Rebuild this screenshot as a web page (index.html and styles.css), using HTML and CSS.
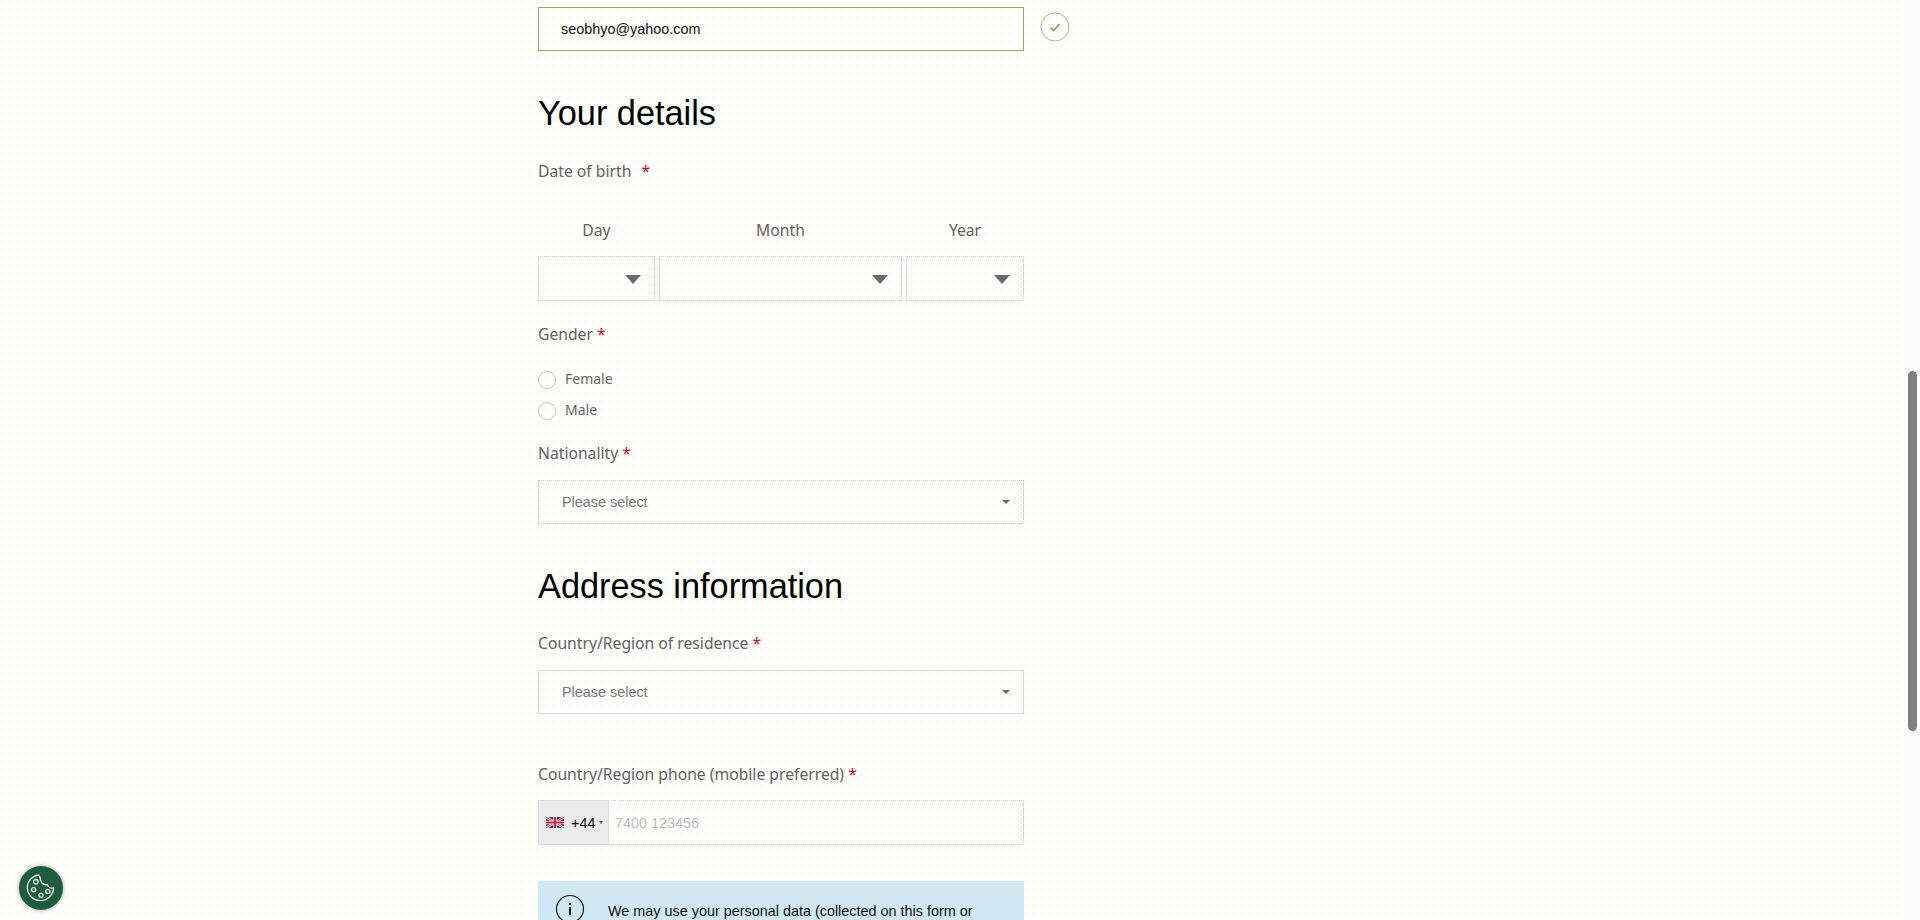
FILE: index.html
```html
<!DOCTYPE html>
<html lang="en">
<head>
<meta charset="utf-8">
<title>Your details</title>
<link rel="stylesheet" href="styles.css">
</head>
<body>
<main class="form">
  <div class="email-row">
    <div class="field field-valid"><span class="value">seobhyo@yahoo.com</span></div>
    <svg class="valid-icon" viewBox="0 0 30 30" aria-hidden="true"><circle cx="15" cy="15" r="14" fill="none" stroke="#a9bd88" stroke-width="1"/><path d="M10.5 15.5l3 3 6-6.500" fill="none" stroke="#7f9c4a" stroke-width="1.600"/></svg>
  </div>

  <h2 class="heading heading-first">Your details</h2>
  <div class="label label-first">Date of birth <span class="req req-gap">*</span></div>
  <div class="dob-labels">
    <span>Day</span><span>Month</span><span>Year</span>
  </div>
  <div class="dob">
    <div class="field field-dotted"><i class="caret-large"></i></div>
    <div class="field field-dotted"><i class="caret-large"></i></div>
    <div class="field field-dotted"><i class="caret-large"></i></div>
  </div>

  <div class="label label-gender">Gender <span class="req">*</span></div>
  <div class="radios">
    <label class="radio"><i class="radio-dot"></i>Female</label>
    <label class="radio"><i class="radio-dot"></i>Male</label>
  </div>

  <div class="label label-nationality">Nationality <span class="req">*</span></div>
  <div class="field field-dotted field-select"><span class="placeholder">Please select</span><i class="caret-small"></i></div>

  <h2 class="heading heading-second">Address information</h2>
  <div class="label label-country">Country/Region of residence <span class="req">*</span></div>
  <div class="field field-solid field-select"><span class="placeholder">Please select</span><i class="caret-small"></i></div>

  <div class="label label-phone">Country/Region phone (mobile preferred) <span class="req">*</span></div>
  <div class="field field-dotted field-phone">
    <div class="dial">
      <svg class="flag" viewBox="0 0 60 36" aria-hidden="true">
        <rect width="60" height="36" fill="#2b2f6e"/>
        <path d="M0 0L60 36M60 0L0 36" stroke="#f2eef0" stroke-width="8"/>
        <path d="M0 0L60 36M60 0L0 36" stroke="#c8283c" stroke-width="3"/>
        <path d="M30 0V36M0 18H60" stroke="#f2eef0" stroke-width="12"/>
        <path d="M30 0V36M0 18H60" stroke="#c8283c" stroke-width="7"/>
      </svg>
      <span class="dial-code">+44</span><i class="caret-tiny"></i>
    </div>
    <span class="phone-placeholder">7400 123456</span>
  </div>

  <div class="notice">
    <svg class="info-icon" viewBox="0 0 30 30" aria-hidden="true"><circle cx="15" cy="15" r="13.500" fill="none" stroke="#1b1b1b" stroke-width="1.200"/><rect x="14" y="13" width="2" height="8" fill="#1b1b1b"/><rect x="14" y="9" width="2" height="2" fill="#1b1b1b"/></svg>
    <p>We may use your personal data (collected on this form or</p>
  </div>
</main>

<div class="scroll-track"><div class="scroll-thumb"></div></div>

<button class="cookie" type="button" aria-label="Cookie settings">
  <svg viewBox="0 0 30 30" aria-hidden="true" fill="none" stroke="#dfe9e2" stroke-width="1.200">
    <path d="M13 3.500c-6.200.8-10.500 6-10 12 .5 6.400 6 11 12.300 10.600 6-.4 10.600-5.300 10.700-11.100-2.500.4-4.800-.9-5.400-3-2.700.5-5.400-1-5.900-3.800-.2-1.500-.5-3.200-1.700-4.700z"/>
    <circle cx="10.500" cy="9.500" r="2"/>
    <circle cx="8.500" cy="16.500" r="1.800"/>
    <circle cx="15" cy="21.500" r="1.800"/>
    <circle cx="21" cy="18" r="1.800"/>
  </svg>
</button>
</body>
</html>
```
FILE: styles.css
```css
* { box-sizing: border-box; }

html, body {
  margin: 0;
  height: 920px;
  overflow: hidden;
}

body {
  background-color: #fdfdfe;
  background-image: radial-gradient(circle at 1px 1px, #fffcd8 0.8px, transparent 1px);
  background-size: 8px 8px;
  font-family: "Liberation Sans", Arial, sans-serif;
  color: #111;
}

.form {
  width: 486px;
  margin-left: 538px;
  padding-top: 7px;
}

.email-row {
  display: flex;
  align-items: center;
  position: relative;
}

.field {
  height: 44px;
  position: relative;
  display: flex;
  align-items: center;
}

.field-valid {
  flex: 1;
  border: 1px solid #8fae62;
  padding-left: 22px;
  font-size: 14.4px;
}

.valid-icon {
  position: absolute;
  left: 502px;
  top: 5px;
  width: 30px;
  height: 30px;
}

.field-dotted { border: 1px dotted #c8c8d6; }
.field-solid { border: 1px solid #d8d8de; }

.field-select {
  padding-left: 23px;
  font-size: 14.4px;
  color: #777;
}

.heading {
  margin: 0;
  font-weight: 400;
  font-size: 34.3px;
  line-height: 40px;
  color: #000;
}

.heading-first { margin-top: 42px; }
.heading-second { margin-top: 42px; }

.label {
  font-family: "Noto Sans", sans-serif;
  font-size: 15.7px;
  line-height: 24px;
  color: #626262;
}

.label-first { margin-top: 26px; }
.label-gender { margin-top: 21px; }
.label-nationality { margin-top: 16px; margin-bottom: 15px; }
.label-country { margin-top: 25px; margin-bottom: 15px; }
.label-phone { margin-top: 48px; margin-bottom: 14px; }

.req { color: #c0102a; }
.req-gap { margin-left: 6px; }

.dob-labels,
.dob {
  display: grid;
  grid-template-columns: 117px 243px 118px;
  column-gap: 4px;
}

.dob-labels {
  margin-top: 35px;
  font-family: "Noto Sans", sans-serif;
  font-size: 15.7px;
  line-height: 24px;
  color: #626262;
  text-align: center;
}

.dob { margin-top: 14px; }

.dob .field { height: 45px; }

.caret-large {
  position: absolute;
  right: 13px;
  top: 18px;
  width: 0;
  height: 0;
  border-left: 8px solid transparent;
  border-right: 8px solid transparent;
  border-top: 9px solid #6a6a6a;
}

.caret-small {
  position: absolute;
  right: 13px;
  top: 19px;
  width: 0;
  height: 0;
  border-left: 4px solid transparent;
  border-right: 4px solid transparent;
  border-top: 4px solid #6a6a6a;
}

.caret-tiny {
  width: 0;
  height: 0;
  margin-left: 4px;
  border-left: 2px solid transparent;
  border-right: 2px solid transparent;
  border-top: 3px solid #555;
}

.radios { margin-top: 17px; }

.radio {
  display: flex;
  align-items: center;
  height: 31px;
  font-family: "Noto Sans", sans-serif;
  font-size: 14px;
  color: #666;
}

.radio-dot {
  width: 18px;
  height: 18px;
  margin-top: 2px;
  margin-right: 9px;
  border: 1px solid #c4c4cc;
  border-radius: 50%;
}

.field-phone { height: 45px; }

.dial {
  display: flex;
  align-items: center;
  width: 71px;
  height: 45px;
  margin: -1px 0 -1px -1px;
  padding-left: 7px;
  background: #ebebeb;
  border: 1px solid #dcdcdc;
  font-size: 14.4px;
}

.flag { width: 18px; height: 11px; margin-right: 7px; }
.dial-code { color: #111; }

.phone-placeholder {
  margin-left: 6px;
  padding-top: 1px;
  font-size: 14.4px;
  color: #bcbcc0;
}

.notice {
  display: flex;
  align-items: flex-start;
  min-height: 120px;
  margin-top: 36px;
  padding: 13px 20px 0 17px;
  background: #cfe8f3;
}

.info-icon { width: 30px; height: 30px; flex: none; margin-right: 23px; }

.notice p {
  margin: 8px 0 0;
  font-size: 14.4px;
  line-height: 18px;
  color: #111;
}

.scroll-track {
  position: fixed;
  top: 0;
  right: 0;
  width: 15px;
  height: 920px;
  background: #fbfbfe;
}

.scroll-thumb {
  position: absolute;
  top: 371px;
  left: 3px;
  width: 9px;
  height: 360px;
  border-radius: 5px;
  background: #7f7f7f;
}

.cookie {
  position: fixed;
  left: 19px;
  top: 866px;
  width: 44px;
  height: 44px;
  padding: 5px;
  border: 0;
  border-radius: 50%;
  background: #1f5b3d;
  box-shadow: 0 0 4px rgba(60, 90, 120, 0.5);
}

.cookie svg { display: block; width: 34px; height: 34px; }
```
